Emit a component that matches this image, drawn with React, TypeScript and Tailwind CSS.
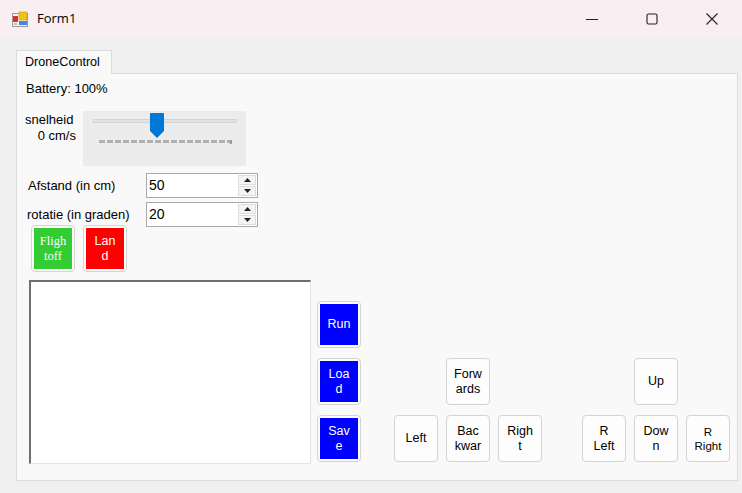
import { ReactNode } from "react";

const font = { fontFamily: '"Liberation Sans", Arial, sans-serif' };

const PlainButton = ({ children }: { children: ReactNode }) => (
  <div className="w-[44px] h-[47px] rounded-[4px] border border-[#d3d3d3] bg-[#fdfdfd] flex items-center justify-center text-center text-[12.5px] leading-[15px] text-black">
    {children}
  </div>
);

const ColorButton = ({
  children,
  color,
  serif,
}: {
  children: ReactNode;
  color: string;
  serif?: boolean;
}) => (
  <div className="w-[44px] h-[47px] rounded-[4px] border border-[#d3d3d3] bg-[#fdfdfd] p-[2px]">
    <div
      className={
        "w-full h-full flex items-center justify-center text-center text-white text-[12.5px] leading-[15px] " +
        color
      }
      style={serif ? { fontFamily: '"Liberation Serif", "Times New Roman", serif' } : undefined}
    >
      {children}
    </div>
  </div>
);

const NumberBox = ({ value }: { value: string }) => (
  <div className="w-[112px] h-[25px] border border-[#a9a9a9] bg-white flex items-center">
    <span className="flex-1 pl-[2px] text-[14px] text-black">{value}</span>
    <div className="w-[19px] h-full flex flex-col py-[1px] pr-[1px] gap-[1px]">
      <div className="flex-1 border border-[#dcdcdc] bg-[#f4f4f4] flex items-center justify-center">
        <svg width="7" height="4" viewBox="0 0 7 4">
          <path d="M3.5 0 L7 4 L0 4 Z" fill="#222" />
        </svg>
      </div>
      <div className="flex-1 border border-[#dcdcdc] bg-[#f4f4f4] flex items-center justify-center">
        <svg width="7" height="4" viewBox="0 0 7 4">
          <path d="M0 0 L7 0 L3.5 4 Z" fill="#222" />
        </svg>
      </div>
    </div>
  </div>
);

const TrackBar = () => (
  <div className="w-[163px] h-[55px] bg-[#ececec] relative">
    <div className="absolute left-[10px] top-[8px] w-[144px] h-[4px] bg-[#e2e2e2] border border-[#d4d4d4]" />
    <svg className="absolute left-[67px] top-[2px]" width="14" height="25" viewBox="0 0 14 25">
      <path d="M1 0 H13 Q14 0 14 1 V18 L7 25 L0 18 V1 Q0 0 1 0 Z" fill="#0078d7" />
    </svg>
    <svg className="absolute left-[16px] top-[29px]" width="133" height="4" viewBox="0 0 133 4">
      {Array.from({ length: 17 }).map((_, i) => (
        <rect key={i} x={i * 8} y={0} width={6} height={3} fill="#b0b0b0" />
      ))}
      <rect x={131} y={0} width={2} height={4} fill="#9a9a9a" />
    </svg>
  </div>
);

const App = () => {
  return (
    <div className="w-[742px] h-[493px] bg-[#f0f0f0] flex flex-col overflow-hidden" style={font}>
      {/* title bar */}
      <div className="h-[37px] bg-[#f9eff3] flex items-center shrink-0">
        <svg className="ml-[12px]" width="16" height="16" viewBox="0 0 16 16">
          <rect x="0.5" y="2.5" width="15" height="13" fill="#f4f4f4" stroke="#9a9a9a" />
          <rect x="1" y="5" width="5" height="6" fill="#d9302c" />
          <rect x="7" y="1" width="8" height="8" fill="#f2c21b" stroke="#c89a10" strokeWidth="0.6" />
          <rect x="7" y="10" width="8" height="4" fill="#4a86d8" />
          <rect x="2" y="12" width="3" height="2" fill="#bcbcbc" />
        </svg>
        <span className="ml-[9px] text-[13px] text-black" style={{ fontFamily: '"Open Sans", "Liberation Sans", sans-serif' }}>
          Form1
        </span>
        <div className="ml-auto flex items-center">
          <div className="w-[60px] flex justify-center">
            <svg width="12" height="12" viewBox="0 0 12 12">
              <path d="M0 6.5 H12" stroke="#222" strokeWidth="1" />
            </svg>
          </div>
          <div className="w-[60px] flex justify-center">
            <svg width="12" height="12" viewBox="0 0 12 12">
              <rect x="1" y="1" width="10" height="10" rx="1.5" fill="none" stroke="#222" strokeWidth="1.1" />
            </svg>
          </div>
          <div className="w-[60px] flex justify-center">
            <svg width="12" height="12" viewBox="0 0 12 12">
              <path d="M0.5 0.5 L11.5 11.5 M11.5 0.5 L0.5 11.5" stroke="#222" strokeWidth="1.1" />
            </svg>
          </div>
        </div>
      </div>

      {/* tab control */}
      <div className="pl-[16px] pt-[13px] flex flex-col">
        <div className="w-[96px] h-[24px] bg-[#f9f9f9] border border-b-0 border-[#dcdcdc] flex items-center pl-[8px] text-[12.6px] text-black relative z-10 -mb-[1px]">
          DroneControl
        </div>
        <div className="w-[722px] h-[408px] bg-[#f9f9f9] border border-[#dcdcdc] flex flex-col pl-[9px] pt-[7px] text-[13px] text-black">
          <div className="h-[16px] leading-[16px]">Battery: 100%</div>

          <div className="flex mt-[14px]">
            <div className="w-[51px] flex flex-col items-end leading-[16px] pt-[1px] -ml-[1px]">
              <span className="self-start">snelheid</span>
              <span>0 cm/s</span>
            </div>
            <div className="ml-[7px]">
              <TrackBar />
            </div>
          </div>

          <div className="flex items-center mt-[7px] ml-[2px]">
            <span className="w-[118px]">Afstand (in cm)</span>
            <NumberBox value="50" />
          </div>
          <div className="flex items-center mt-[4px] ml-[1px]">
            <span className="w-[119px]">rotatie (in graden)</span>
            <NumberBox value="20" />
          </div>

          <div className="flex gap-[8px] ml-[5px] -mt-[2px]">
            <ColorButton color="bg-[#33cc33]" serif>
              Fligh
              <br />
              toff
            </ColorButton>
            <ColorButton color="bg-[#ff0000]">
              Lan
              <br />d
            </ColorButton>
          </div>

          <div className="flex mt-[8px] ml-[3px]">
            <div className="w-[282px] h-[184px] bg-white border-t-2 border-l-2 border-t-[#6e6e6e] border-l-[#6e6e6e] border-r border-b border-r-[#e3e3e3] border-b-[#e3e3e3]" />

            <div className="flex flex-col gap-[10px] ml-[6px] mt-[21px]">
              <ColorButton color="bg-[#0000ff]">Run</ColorButton>
              <ColorButton color="bg-[#0000ff]">
                Loa
                <br />d
              </ColorButton>
              <ColorButton color="bg-[#0000ff]">
                Sav
                <br />e
              </ColorButton>
            </div>

            <div className="grid grid-cols-[44px_44px_44px] gap-x-[8px] gap-y-[10px] ml-[33px] mt-[78px] h-fit">
              <div />
              <PlainButton>
                Forw
                <br />
                ards
              </PlainButton>
              <div />
              <PlainButton>Left</PlainButton>
              <PlainButton>
                Bac
                <br />
                kwar
              </PlainButton>
              <PlainButton>
                Righ
                <br />t
              </PlainButton>
            </div>

            <div className="grid grid-cols-[44px_44px_44px] gap-x-[8px] gap-y-[10px] ml-[40px] mt-[78px] h-fit">
              <div />
              <PlainButton>Up</PlainButton>
              <div />
              <PlainButton>
                R
                <br />
                Left
              </PlainButton>
              <PlainButton>
                Dow
                <br />n
              </PlainButton>
              <PlainButton>
                <span className="text-[11.5px] leading-[14px]">
                  R
                  <br />
                  Right
                </span>
              </PlainButton>
            </div>
          </div>
        </div>
      </div>
    </div>
  );
};

export default App;
